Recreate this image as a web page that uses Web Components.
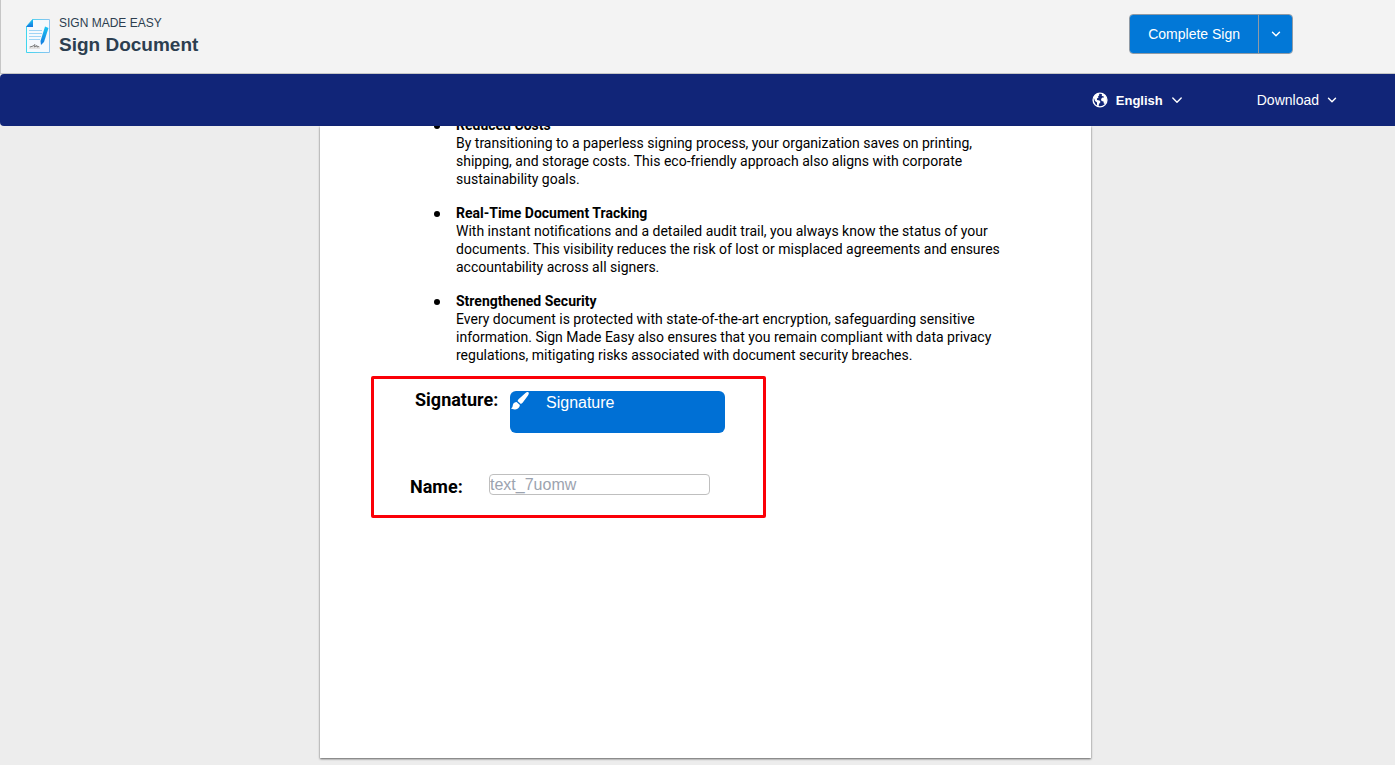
<!DOCTYPE html>
<html lang="en">
<head>
<meta charset="utf-8">
<meta name="viewport" content="width=device-width, initial-scale=1">
<title>Sign Document</title>
<style>
    * {
        box-sizing: border-box;
    }

    body {
        margin: 0;
        min-height: 100vh;
        display: flex;
        flex-direction: column;
        background: #ededed;
        font-family: "Liberation Sans", Arial, sans-serif;
    }
</style>
</head>
<body>
<sign-header brand="SIGN MADE EASY" heading="Sign Document">
    <split-button label="Complete Sign"></split-button>
</sign-header>

<sign-toolbar></sign-toolbar>

<document-page>
    <benefit-item heading="Reduced Costs">By transitioning to a paperless signing process, your organization saves on printing,<br>shipping, and storage costs. This eco-friendly approach also aligns with corporate<br>sustainability goals.</benefit-item>
    <benefit-item heading="Real-Time Document Tracking">With instant notifications and a detailed audit trail, you always know the status of your<br>documents. This visibility reduces the risk of lost or misplaced agreements and ensures<br>accountability across all signers.</benefit-item>
    <benefit-item heading="Strengthened Security">Every document is protected with state-of-the-art encryption, safeguarding sensitive<br>information. Sign Made Easy also ensures that you remain compliant with data privacy<br>regulations, mitigating risks associated with document security breaches.</benefit-item>
    <signing-fields slot="fields"></signing-fields>
</document-page>

<script>
    const chevron = (size, width) => `
        <svg width="${size}" height="${size}" viewBox="0 0 12 12" fill="none" stroke="currentColor"
            stroke-width="${width}" stroke-linecap="round" stroke-linejoin="round" aria-hidden="true">
            <path d="M1.8 4 6 8.2 10.2 4"/>
        </svg>`;

    class SignHeader extends HTMLElement {
        constructor() {
            super();
            this.attachShadow({ mode: 'open' });
        }

        connectedCallback() {
            this.shadowRoot.innerHTML = `
                <style>
                    :host {
                        display: block;
                    }

                    header {
                        box-sizing: border-box;
                        height: 74px;
                        display: flex;
                        justify-content: space-between;
                        align-items: flex-start;
                        padding: 14px 102px 0 24px;
                        background: #f3f3f3;
                        border-left: 1px solid #c6c6c6;
                        border-bottom: 1px solid #c6c6c6;
                    }

                    .brand {
                        display: flex;
                        align-items: center;
                        gap: 8px;
                        color: #2c3e50;
                    }

                    .logo {
                        display: block;
                    }

                    p, h1 {
                        margin: 0;
                    }

                    p {
                        font-size: 12px;
                        line-height: 18px;
                    }

                    h1 {
                        font-size: 19px;
                        line-height: 26px;
                    }
                </style>

                <header>
                    <div class="brand">
                        <svg class="logo" width="26" height="36" viewBox="0 0 26 36" aria-hidden="true">
                            <defs>
                                <linearGradient id="edge" x1="0" x2="1">
                                    <stop offset="0" stop-color="#3fd6ee"/>
                                    <stop offset="1" stop-color="#8cc4f0"/>
                                </linearGradient>
                                <linearGradient id="pen" x1="0" x2="0" y1="0" y2="1">
                                    <stop offset="0" stop-color="#18c4f2"/>
                                    <stop offset="1" stop-color="#1479e0"/>
                                </linearGradient>
                            </defs>
                            <path d="M7.5 1.5H24.5V34.5H1.5V8.5Z" fill="#f5f9fd" stroke="url(#edge)"/>
                            <path d="M8 1V9H1Z" fill="url(#pen)"/>
                            <path d="M4 12.5H17M4 15.5H17M4 18.5H16M4 21.5H15" stroke="#9fd4f5"/>
                            <path d="M4 29.5H15" stroke="#e2e2e2" stroke-width="3"/>
                            <path d="M5 29 8 28 10 26.500 9.500 29 12 27.500 12 29 14 28.500" fill="none" stroke="#666" stroke-width=".8"/>
                            <path d="M20 8.500 23.500 10 19 24 16 27 15.500 23Z" fill="url(#pen)"/>
                        </svg>
                        <div>
                            <p>${this.getAttribute('brand')}</p>
                            <h1>${this.getAttribute('heading')}</h1>
                        </div>
                    </div>
                    <slot></slot>
                </header>
            `;
        }
    }

    class SplitButton extends HTMLElement {
        constructor() {
            super();
            this.attachShadow({ mode: 'open' });
        }

        connectedCallback() {
            this.shadowRoot.innerHTML = `
                <style>
                    :host {
                        display: flex;
                        box-sizing: border-box;
                        height: 40px;
                        border: 1px solid #8f9aa5;
                        border-radius: 4px;
                        overflow: hidden;
                    }

                    button {
                        margin: 0;
                        padding: 0 18px;
                        border: 0;
                        background: #0278d7;
                        color: #fff;
                        font: 14px "Liberation Sans", Arial, sans-serif;
                        cursor: pointer;
                    }

                    .more {
                        width: 34px;
                        padding: 0;
                        display: flex;
                        align-items: center;
                        justify-content: center;
                        border-left: 1px solid #8f9aa5;
                    }

                    button:hover {
                        background: #026bc0;
                    }
                </style>

                <button type="button">${this.getAttribute('label')}</button>
                <button type="button" class="more" aria-label="More actions">${chevron(10, 1.7)}</button>
            `;
        }
    }

    class SignToolbar extends HTMLElement {
        constructor() {
            super();
            this.attachShadow({ mode: 'open' });
        }

        connectedCallback() {
            this.shadowRoot.innerHTML = `
                <style>
                    :host {
                        display: block;
                    }

                    nav {
                        box-sizing: border-box;
                        height: 52px;
                        display: flex;
                        justify-content: flex-end;
                        align-items: center;
                        gap: 74px;
                        padding: 0 58px 0 0;
                        background: #112578;
                        border-radius: 4px 0 0 4px;
                    }

                    button {
                        display: flex;
                        align-items: center;
                        gap: 8px;
                        padding: 0;
                        border: 0;
                        background: none;
                        color: #fff;
                        font: 14px "Liberation Sans", Arial, sans-serif;
                        cursor: pointer;
                    }

                    .language {
                        font-size: 13px;
                        font-weight: bold;
                    }
                </style>

                <nav>
                    <button type="button" class="language">
                        <svg width="16" height="16" viewBox="0 0 16 16" aria-hidden="true">
                            <circle cx="8" cy="8" r="6.900" fill="none" stroke="#fff" stroke-width="1.400"/>
                            <path fill="#fff" d="M1.500 5 4 2 6.500 1.500 7.500 3 6 4.500 6.500 5.500 5 6.500 5 8 7.500 8.500 8.500 10 7 12 6.500 14.500 5 13.500 5 10.500 3 9ZM10 1.500 13 3 14.500 6 14.500 9.500 13 12 11.800 11.500 11.500 9.500 9.500 9 9 7 10.500 5.500 12 5.500 11.500 4.200 9.800 4Z"/>
                        </svg>
                        English
                        ${chevron(12, 1.4)}
                    </button>
                    <button type="button">Download ${chevron(10, 1.7)}</button>
                </nav>
            `;
        }
    }

    class DocumentPage extends HTMLElement {
        constructor() {
            super();
            this.attachShadow({ mode: 'open' });
        }

        connectedCallback() {
            this.shadowRoot.innerHTML = `
                <style>
                    :host {
                        flex: 1;
                        display: flex;
                        justify-content: center;
                        padding: 0 0 7px 16px;
                    }

                    article {
                        box-sizing: border-box;
                        width: 100%;
                        max-width: 771px;
                        overflow: hidden;
                        background: #fff;
                        box-shadow: 0 1px 2px rgba(0, 0, 0, 0.6);
                        color: #000;
                        font-family: Roboto, sans-serif;
                    }

                    /* the page is scrolled, so its first line is cut by the toolbar */
                    .list {
                        display: flex;
                        flex-direction: column;
                        gap: 16px;
                        margin: -10px 0 0 114px;
                    }
                </style>

                <article>
                    <div class="list" role="list"><slot></slot></div>
                    <slot name="fields"></slot>
                </article>
            `;
        }
    }

    class BenefitItem extends HTMLElement {
        constructor() {
            super();
            this.attachShadow({ mode: 'open' });
        }

        connectedCallback() {
            this.setAttribute('role', 'listitem');
            this.shadowRoot.innerHTML = `
                <style>
                    :host {
                        display: flex;
                        gap: 16px;
                        font-size: 14px;
                        line-height: 18px;
                    }

                    .dot {
                        flex: none;
                        width: 6px;
                        height: 6px;
                        margin-top: 7px;
                        border-radius: 50%;
                        background: #000;
                    }

                    h2, p {
                        margin: 0;
                        font-size: inherit;
                    }
                </style>

                <span class="dot"></span>
                <div>
                    <h2>${this.getAttribute('heading')}</h2>
                    <p><slot></slot></p>
                </div>
            `;
        }
    }

    class SigningFields extends HTMLElement {
        constructor() {
            super();
            this.attachShadow({ mode: 'open' });
        }

        connectedCallback() {
            this.shadowRoot.innerHTML = `
                <style>
                    :host {
                        display: block;
                        box-sizing: border-box;
                        width: 395px;
                        height: 142px;
                        margin: 12px 0 0 51px;
                        padding: 12px 36px 0;
                        border: 3px solid #fb0007;
                        border-radius: 2px;
                    }

                    .row {
                        display: flex;
                        align-items: flex-start;
                    }

                    .signature {
                        height: 83px;
                        padding-left: 5px;
                    }

                    label {
                        flex: none;
                        width: 79px;
                        font-size: 18px;
                        font-weight: bold;
                        line-height: 18px;
                    }

                    .signature label {
                        width: 95px;
                    }

                    .name label {
                        padding-top: 4px;
                    }

                    button, input {
                        box-sizing: border-box;
                        margin: 0;
                        font: 16px "Liberation Sans", Arial, sans-serif;
                    }

                    button {
                        width: 215px;
                        height: 42px;
                        display: flex;
                        align-items: flex-start;
                        gap: 16px;
                        padding: 0;
                        border: 0;
                        border-radius: 6px;
                        background: #0070d5;
                        color: #fff;
                        line-height: 24px;
                        cursor: pointer;
                    }

                    input {
                        width: 221px;
                        height: 21px;
                        padding: 0;
                        border: 1px solid #bfbfbf;
                        border-radius: 4px;
                        background: #fff;
                    }

                    input::placeholder {
                        color: #9ca3af;
                    }
                </style>

                <div class="row signature">
                    <label for="signature">Signature:</label>
                    <button type="button" id="signature">
                        <svg width="20" height="20" viewBox="0 0 20 20" fill="#fff" aria-hidden="true">
                            <path d="M18.400 1.300C19.200 2 18.800 3.300 18 4.500L12.600 11.700 10.900 13 7.500 9.900 8.500 8.300 15.200 2.200C16.500 1 17.700.600 18.400 1.300Z"/>
                            <path d="M6.600 11 9.900 14C9.600 16.500 8 18.300 5.200 18.400 3.500 18.500 1.800 18.200 1 17.300 2.600 16.900 2.500 15.500 2.900 13.700 3.400 11.900 4.900 11 6.600 11Z"/>
                        </svg>
                        Signature
                    </button>
                </div>
                <div class="row name">
                    <label for="name">Name:</label>
                    <input type="text" id="name" placeholder="text_7uomw">
                </div>
            `;
        }
    }

    customElements.define('sign-header', SignHeader);
    customElements.define('split-button', SplitButton);
    customElements.define('sign-toolbar', SignToolbar);
    customElements.define('document-page', DocumentPage);
    customElements.define('benefit-item', BenefitItem);
    customElements.define('signing-fields', SigningFields);
</script>
</body>
</html>
